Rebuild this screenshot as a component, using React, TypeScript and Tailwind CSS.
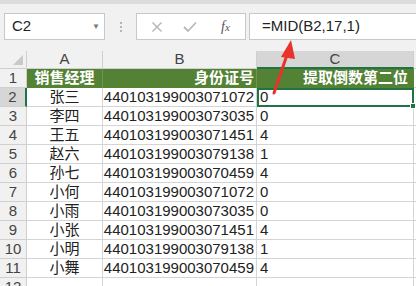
import React from 'react';

const rows: [string, string, string][] = [
  ['张三', '440103199003071072', '0'],
  ['李四', '440103199003073035', '0'],
  ['王五', '440103199003071451', '4'],
  ['赵六', '440103199003079138', '1'],
  ['孙七', '440103199003070459', '4'],
  ['小何', '440103199003071072', '0'],
  ['小雨', '440103199003073035', '0'],
  ['小张', '440103199003071451', '4'],
  ['小明', '440103199003079138', '1'],
  ['小舞', '440103199003070459', '4'],
];

const font = { fontFamily: '"Liberation Sans", "Noto Sans CJK SC", sans-serif' };

const App: React.FC = () => {
  return (
    <div className="relative w-[416px] h-[286px] overflow-hidden bg-[#f1f1f1] text-[#222]" style={font}>
      <div className="h-[4px] bg-[#dcdcdc]" />

      {/* formula bar */}
      <div className="flex items-center h-[27px] mt-[9px]">
        <div className="ml-[4px] w-[101px] h-[27px] bg-white border border-[#c8c8c8] flex items-center justify-between pl-[7px] pr-[4px]">
          <span className="text-[15px]">C2</span>
          <span className="text-[8px] text-[#777] mt-[1px]">▼</span>
        </div>
        <div className="w-[31px] flex flex-col items-center gap-[2px]">
          <span className="w-[2px] h-[2px] bg-[#b5b5b5]" />
          <span className="w-[2px] h-[2px] bg-[#b5b5b5]" />
          <span className="w-[2px] h-[2px] bg-[#b5b5b5]" />
        </div>
        <div className="w-[110px] h-[27px] bg-white border border-[#c8c8c8] flex items-center">
          <svg width="12" height="12" viewBox="0 0 12 12" className="ml-[14px]">
            <path d="M1.5 1.5 L10.5 10.5 M10.5 1.5 L1.5 10.5" stroke="#b3b3b3" strokeWidth="1.4" />
          </svg>
          <svg width="14" height="12" viewBox="0 0 14 12" className="ml-[20px]">
            <path d="M1 6 L5 10 L13 1.5" stroke="#b8b8b8" strokeWidth="1.8" fill="none" />
          </svg>
          <span className="ml-[24px] text-[14px] italic text-[#555]" style={{ fontFamily: '"Liberation Serif", serif' }}>
            f<span className="text-[11px]">x</span>
          </span>
        </div>
        <div className="ml-[3px] flex-1 h-[27px] bg-white border border-[#c8c8c8] border-r-0 flex items-center pl-[12px]">
          <span className="text-[15px]">=MID(B2,17,1)</span>
        </div>
      </div>

      {/* grid */}
      <div className="mt-[11px] grid grid-cols-[27px_76px_154px_157px_1fr] grid-rows-[18px_repeat(12,19px)] text-[15px] bg-white">
        <div className="bg-[#f1f1f1] border-r border-b border-[#cfcfcf] flex items-end justify-end pr-[3px] pb-[3px]">
          <svg width="10" height="10" viewBox="0 0 10 10">
            <path d="M10 0 L10 10 L0 10 Z" fill="#c9c9c9" />
          </svg>
        </div>
        <div className="bg-[#f1f1f1] border-r border-b border-[#cfcfcf] flex items-center justify-center text-[#444]">A</div>
        <div className="bg-[#f1f1f1] border-r border-b border-[#cfcfcf] flex items-center justify-center text-[#444]">B</div>
        <div className="bg-[#d6d6d6] border-r border-[#cfcfcf] border-b-2 border-b-[#217346] flex items-center justify-center text-[#444]">C</div>
        <div className="bg-[#f1f1f1] border-b border-[#cfcfcf]" />

        <div className="bg-[#f1f1f1] border-r border-b border-[#cfcfcf] flex items-center justify-center text-[#444]">1</div>
        <div className="bg-[#548235] border-r border-[#6a9450] flex items-center justify-center text-white font-bold">销售经理</div>
        <div className="bg-[#548235] border-r border-[#6a9450] flex items-center justify-end pr-[2px] text-white font-bold">身份证号</div>
        <div className="bg-[#548235] flex items-center justify-end pr-[6px] text-white font-bold">提取倒数第二位</div>
        <div className="border-b border-[#d4d4d4]" />

        {rows.map(([name, id, val], i) => {
          const sel = i === 0;
          return (
            <React.Fragment key={i}>
              <div
                className={
                  sel
                    ? 'bg-[#d6d6d6] border-r-2 border-r-[#217346] border-b border-b-[#cfcfcf] flex items-center justify-center text-[#444]'
                    : 'bg-[#f1f1f1] border-r border-b border-[#cfcfcf] flex items-center justify-center text-[#444]'
                }
              >
                {i + 2}
              </div>
              <div className="border-r border-b border-[#d4d4d4] flex items-center justify-center">{name}</div>
              <div className="border-r border-b border-[#d4d4d4] flex items-center justify-end pr-[2px]">{id}</div>
              {sel ? (
                <div className="relative border-2 border-[#217346] flex items-center pl-[1px]">
                  {val}
                  <span className="absolute right-[-4px] bottom-[-4px] w-[6px] h-[6px] bg-[#217346] border border-white" />
                </div>
              ) : (
                <div className="border-r border-b border-[#d4d4d4] flex items-center pl-[3px]">{val}</div>
              )}
              <div className="border-b border-[#d4d4d4]" />
            </React.Fragment>
          );
        })}

        <div className="bg-[#f1f1f1] border-r border-b border-[#cfcfcf] flex items-center justify-center text-[#444]">12</div>
        <div className="border-r border-b border-[#d4d4d4]" />
        <div className="border-r border-b border-[#d4d4d4]" />
        <div className="border-r border-b border-[#d4d4d4]" />
        <div className="border-b border-[#d4d4d4]" />
      </div>

      {/* red arrow */}
      <svg className="absolute left-[266px] top-[38px]" width="34" height="58" viewBox="0 0 34 58">
        <path d="M8 55 L22 14" stroke="#e8322b" strokeWidth="3" strokeLinecap="round" />
        <path d="M25 2 L15 19 L29 21 Z" fill="#e8322b" />
      </svg>
    </div>
  );
};

export default App;
